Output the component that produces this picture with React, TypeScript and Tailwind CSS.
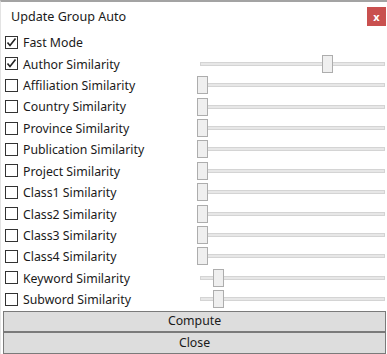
import React from 'react';

type Row = { label: string; checked: boolean; thumb: number | null };

const rows: Row[] = [
  { label: 'Fast Mode', checked: true, thumb: null },
  { label: 'Author Similarity', checked: true, thumb: 125 },
  { label: 'Affiliation Similarity', checked: false, thumb: 0 },
  { label: 'Country Similarity', checked: false, thumb: 0 },
  { label: 'Province Similarity', checked: false, thumb: 0 },
  { label: 'Publication Similarity', checked: false, thumb: 0 },
  { label: 'Project Similarity', checked: false, thumb: 0 },
  { label: 'Class1 Similarity', checked: false, thumb: 0 },
  { label: 'Class2 Similarity', checked: false, thumb: 0 },
  { label: 'Class3 Similarity', checked: false, thumb: 0 },
  { label: 'Class4 Similarity', checked: false, thumb: 0 },
  { label: 'Keyword Similarity', checked: false, thumb: 16 },
  { label: 'Subword Similarity', checked: false, thumb: 16 },
];

function CheckBox({ checked }: { checked: boolean }) {
  return (
    <div className="w-[13px] h-[13px] border border-[#333333] bg-white flex items-center justify-center shrink-0">
      {checked && (
        <svg width="11" height="11" viewBox="0 0 11 11">
          <path d="M1.5 5.5 L4 8.5 L9.5 1.5" fill="none" stroke="#222222" strokeWidth="1.6" />
        </svg>
      )}
    </div>
  );
}

function Slider({ left }: { left: number }) {
  return (
    <div className="relative w-[188px] h-[18px] mr-[2px] shrink-0">
      <div className="absolute left-[3px] right-0 top-[7px] h-[4px] bg-[#e7e7e7] border border-[#d4d4d4]" />
      <div
        className="absolute top-0 w-[11px] h-[18px] bg-[#efefef] border border-[#adadad]"
        style={{ left }}
      />
    </div>
  );
}

export default function App() {
  return (
    <div
      className="w-[387px] h-[354px] bg-white border-t-2 border-t-[#a3a3a3] border-l border-l-[#e3e3e3] flex flex-col overflow-hidden text-[12.3px] text-[#1a1a1a]"
      style={{ fontFamily: '"Noto Sans", "Open Sans", sans-serif' }}
    >
      {/* Title bar */}
      <div className="h-[30px] flex items-center justify-between pl-[10px] pr-[1px]">
        <span className="text-[12.6px] leading-none">Update Group Auto</span>
        <div className="w-[19px] h-[19px] bg-[#c9504f] flex items-center justify-center text-white text-[11px] font-bold leading-none">
          x
        </div>
      </div>

      {/* Options */}
      <div className="flex flex-col">
        {rows.map((r) => (
          <div key={r.label} className="h-[21.42px] flex items-center">
            <div className="flex-1 flex items-center pl-[4px] gap-[5px]">
              <CheckBox checked={r.checked} />
              <span className="leading-none pt-[2px]">{r.label}</span>
            </div>
            {r.thumb !== null && <Slider left={r.thumb} />}
          </div>
        ))}
      </div>

      {/* Buttons */}
      <div className="flex flex-col pl-[2px] pr-[1px] mt-[1px]">
        <button className="h-[21px] bg-[#dddddd] border border-[#7a7a7a] leading-none">
          Compute
        </button>
        <button className="h-[22px] bg-[#dddddd] border border-[#7a7a7a] leading-none">
          Close
        </button>
      </div>
    </div>
  );
}
